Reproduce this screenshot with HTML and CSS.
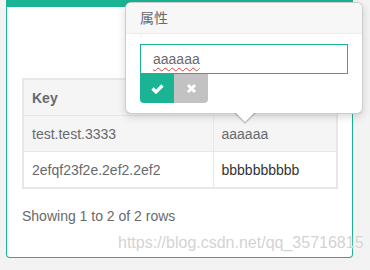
FILE: index.html
```html
<!DOCTYPE html>
<html>
<head>
  <title>Editable table</title>
  <link rel="stylesheet" href="styles.css">
</head>
<body>
  <div class="page">
    <div class="ibox">
      <div class="ibox-content">
        <table class="table">
          <thead>
            <tr>
              <th class="col-key">Key</th>
              <th></th>
            </tr>
          </thead>
          <tbody>
            <tr class="striped">
              <td>test.test.3333</td>
              <td>aaaaaa</td>
            </tr>
            <tr>
              <td>2efqf23f2e.2ef2.2ef2</td>
              <td class="value">bbbbbbbbbb</td>
            </tr>
          </tbody>
        </table>
        <div class="pagination-detail">Showing 1 to 2 of 2 rows</div>
      </div>
    </div>

    <div class="popover">
      <div class="popover-title">属性</div>
      <div class="popover-content">
        <div class="editable-input">
          <span class="input-text">aaaaaa</span>
        </div>
        <div class="editable-buttons">
          <button class="btn btn-ok">
            <svg width="13" height="11" viewBox="0 0 13 11">
              <path d="M1.5 5.5 L5 9 L11.5 2.5" fill="none" stroke="#fff" stroke-width="3.2"/>
            </svg>
          </button>
          <button class="btn btn-cancel">
            <svg width="11" height="11" viewBox="0 0 11 11">
              <path d="M2 2 L9 9 M9 2 L2 9" fill="none" stroke="#fff" stroke-width="3"/>
            </svg>
          </button>
        </div>
      </div>
      <div class="arrow"></div>
    </div>

    <div class="watermark">https://blog.csdn.net/qq_35716815</div>
  </div>
</body>
</html>
```

FILE: styles.css
```css
* {
  margin: 0;
  padding: 0;
  box-sizing: border-box;
}

body {
  font-family: 'Liberation Sans', Arial, 'Noto Sans CJK SC', sans-serif;
  font-size: 14px;
  color: #676a6c;
  background: #f3f3f4;
  width: 370px;
  height: 270px;
  overflow: hidden;
}

.page {
  position: relative;
  padding-left: 6px;
}

/* Card */
.ibox {
  width: 347px;
  height: 258px;
  background: #fff;
  border: 1px solid #1ab394;
  border-top: 7px solid #1ab394;
  border-radius: 0 0 4px 4px;
}

.ibox-content {
  padding: 71px 14px 0 15px;
}

/* Table */
.table {
  width: 316px;
  border-collapse: collapse;
  border: 2px solid #e7e7e7;
}

.table th,
.table td {
  padding: 8px 8px 7px;
  line-height: 20px;
  text-align: left;
  border: 1px solid #e7e7e7;
}

.table th {
  font-weight: bold;
  background: #f5f5f5;
}

.table .col-key {
  width: 190px;
}

.striped td {
  background: #f5f5f5;
}

.value {
  color: #333;
}

.pagination-detail {
  margin-top: 17px;
  line-height: 20px;
}

/* Popover (x-editable) */
.popover {
  position: absolute;
  left: 125px;
  top: 2px;
  width: 238px;
  background: #fff;
  border: 1px solid rgba(0, 0, 0, 0.2);
  border-radius: 6px;
  box-shadow: 0 3px 8px rgba(0, 0, 0, 0.15);
}

.popover-title {
  padding: 7px 14px;
  line-height: 16px;
  background: #f7f7f7;
  border-bottom: 1px solid #ebebeb;
  border-radius: 5px 5px 0 0;
}

.popover-content {
  padding: 10px 14px 10px 14px;
}

.editable-input {
  height: 30px;
  border: 1px solid #1ab394;
  padding: 0 12px;
  display: flex;
  align-items: center;
}

.input-text {
  text-decoration: underline wavy #e0403a;
  text-decoration-thickness: 1px;
  text-underline-offset: 3px;
}

.editable-buttons {
  display: flex;
}

.btn {
  width: 34px;
  height: 29px;
  border: none;
  display: flex;
  align-items: center;
  justify-content: center;
}

.btn-ok {
  background: #1ab394;
  border-radius: 0 0 0 4px;
}

.btn-cancel {
  background: #c2c2c2;
  border-radius: 0 0 4px 0;
}

.arrow {
  position: absolute;
  left: 108px;
  bottom: -11px;
  width: 0;
  height: 0;
  border-left: 11px solid transparent;
  border-right: 11px solid transparent;
  border-top: 11px solid rgba(0, 0, 0, 0.2);
}

.arrow::after {
  content: '';
  position: absolute;
  left: -10px;
  top: -12px;
  border-left: 10px solid transparent;
  border-right: 10px solid transparent;
  border-top: 10px solid #fff;
}

/* CSDN watermark */
.watermark {
  position: absolute;
  left: 118px;
  top: 234px;
  font-size: 16px;
  color: #d3d3d3;
  text-shadow: 0 0 2px #fff, 0 0 1px #fff;
}
```
